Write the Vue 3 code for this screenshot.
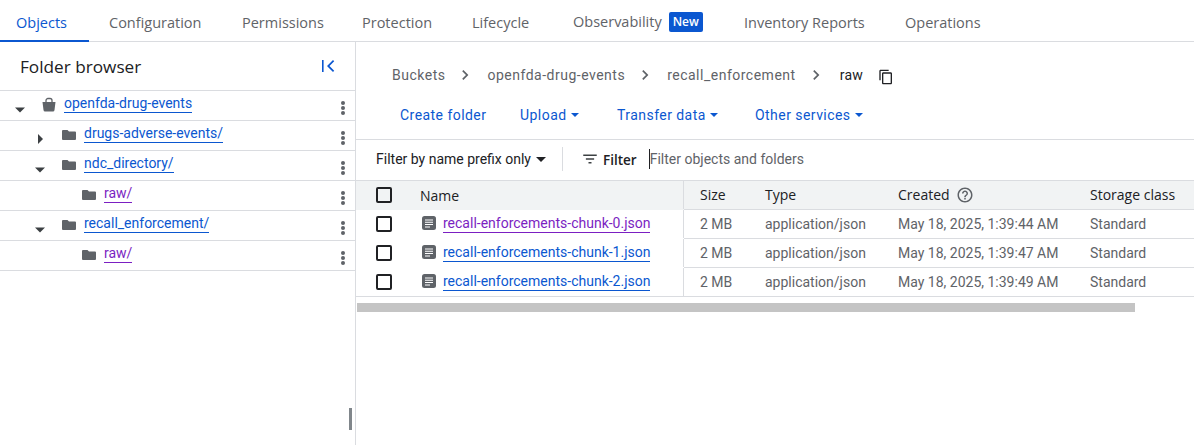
<template>
  <div class="pagina">
    <nav class="tabs">
      <a
        v-for="tab in tabs"
        :key="tab.label"
        class="tab"
        :class="{ activo: tab.active }"
        :style="{ width: tab.width + 'px' }"
      >
        <span :class="{ alto: tab.badge }">{{ tab.label }}</span>
        <span v-if="tab.badge" class="badge">New</span>
      </a>
    </nav>

    <div class="cuerpo">
      <aside class="lateral">
        <header class="lateral-cabecera">
          <h2>Folder browser</h2>
          <svg class="colapsar" width="24" height="24" viewBox="0 0 24 24">
            <path d="M5 6h1.600v12H5zM17.200 7.300 16 6l-6 6 6 6 1.200-1.300L12.500 12z" fill="#0b57d0" />
          </svg>
        </header>

        <div
          v-for="nodo in arbol"
          :key="nodo.id"
          class="nodo"
          :style="{ paddingLeft: nodo.nivel * 20 + 'px' }"
        >
          <span class="flecha">
            <svg v-if="nodo.flecha === 'abajo'" width="24" height="24" viewBox="0 0 24 24">
              <path d="M7 10.500h10l-5 5z" fill="#3c4043" />
            </svg>
            <svg v-else-if="nodo.flecha === 'derecha'" width="24" height="24" viewBox="0 0 24 24">
              <path d="M10 7l5 5-5 5z" fill="#3c4043" />
            </svg>
          </span>
          <svg v-if="nodo.cubo" class="icono-nodo" width="16" height="16" viewBox="0 0 16 16">
            <path d="M1.500 5h13l-1 8q-.2 1.500-1.500 1.500H4q-1.300 0-1.500-1.500z" fill="#5f6368" />
            <path d="M5 5.500V3.500a2 2 0 0 1 2-2h2a2 2 0 0 1 2 2v2" fill="none" stroke="#5f6368" stroke-width="1.300" />
          </svg>
          <svg v-else class="icono-nodo" width="16" height="16" viewBox="0 0 16 16">
            <path d="M2 3h4.500L8 4.500h6q1 0 1 1V12q0 1-1 1H2q-1 0-1-1V4q0-1 1-1z" fill="#5f6368" />
          </svg>
          <a class="enlace" :class="{ visitado: nodo.visitado }">{{ nodo.nombre }}</a>
          <svg class="puntos" width="24" height="24" viewBox="0 0 24 24">
            <circle cx="12" cy="7" r="2" fill="#5f6368" />
            <circle cx="12" cy="12" r="2" fill="#5f6368" />
            <circle cx="12" cy="17" r="2" fill="#5f6368" />
          </svg>
        </div>

        <span class="asa"></span>
      </aside>

      <main class="principal">
        <div class="migas">
          <template v-for="miga in migas" :key="miga">
            <span class="miga">{{ miga }}</span>
            <svg width="24" height="24" viewBox="0 0 24 24" class="separador">
              <path d="M9.400 7 8.200 8.200 12 12l-3.800 3.800L9.400 17l5-5z" fill="#5f6368" />
            </svg>
          </template>
          <span class="miga actual">raw</span>
          <svg class="copiar" width="16" height="16" viewBox="0 0 24 24">
            <path d="M16 1H4c-1.100 0-2 .9-2 2v14h2V3h12V1zm3 4H8c-1.100 0-2 .9-2 2v14c0 1.100.9 2 2 2h11c1.100 0 2-.9 2-2V7c0-1.100-.9-2-2-2zm0 16H8V7h11v14z" fill="#202124" />
          </svg>
        </div>

        <div class="acciones">
          <a class="accion crear">Create folder</a>
          <a v-for="a in acciones" :key="a.label" class="accion" :style="{ width: a.width + 'px' }">
            {{ a.label }}<i class="triangulo azul"></i>
          </a>
        </div>

        <div class="filtros">
          <span class="prefijo">Filter by name prefix only<i class="triangulo oscuro"></i></span>
          <span class="divisor"></span>
          <svg class="icono-filtro" width="18" height="18" viewBox="0 0 24 24">
            <path d="M3 6h18v2H3zM6.500 11h11v2h-11zM10 16h4v2h-4z" fill="#3c4043" />
          </svg>
          <span class="filtro">Filter</span>
          <span class="cursor"></span>
          <span class="placeholder">Filter objects and folders</span>
        </div>

        <div class="fila cabecera">
          <span class="col-check"><i class="check"></i></span>
          <span class="col-nombre">Name</span>
          <span class="derecha">
            <span class="col-tam">Size</span>
            <span class="col-tipo">Type</span>
            <span class="col-fecha">
              Created
              <svg width="18" height="18" viewBox="0 0 24 24">
                <path d="M11 18h2v-2h-2v2zm1-16C6.480 2 2 6.480 2 12s4.480 10 10 10 10-4.480 10-10S17.520 2 12 2zm0 18c-4.410 0-8-3.590-8-8s3.590-8 8-8 8 3.590 8 8-3.590 8-8 8zm0-14c-2.210 0-4 1.790-4 4h2c0-1.100.9-2 2-2s2 .9 2 2c0 2-3 1.750-3 5h2c0-2.250 3-2.500 3-5 0-2.210-1.790-4-4-4z" fill="#5f6368" />
              </svg>
            </span>
            <span class="col-clase">Storage class</span>
          </span>
        </div>

        <div v-for="f in archivos" :key="f.nombre" class="fila">
          <span class="col-check"><i class="check"></i></span>
          <span class="col-nombre archivo">
            <svg width="16" height="16" viewBox="0 0 16 16">
              <rect x="1" y="1" width="14" height="14" rx="2.500" fill="#5f6368" />
              <path d="M4 4.500h8v1H4zM4 6.800h8v1H4zM4 9.100h8v1H4zM4 11.400h5v1H4z" fill="#fff" />
            </svg>
            <a class="enlace" :class="{ visitado: f.visitado }">{{ f.nombre }}</a>
          </span>
          <span class="derecha">
            <span class="col-tam">2 MB</span>
            <span class="col-tipo">application/json</span>
            <span class="col-fecha">{{ f.fecha }}</span>
            <span class="col-clase">Standard</span>
          </span>
        </div>
        <div class="linea-final"></div>

        <div class="scroll"><div class="scroll-barra"></div></div>
      </main>
    </div>
  </div>
</template>

<script setup>
const tabs = [
  { label: "Objects", width: 89, active: true },
  { label: "Configuration", width: 133 },
  { label: "Permissions", width: 120 },
  { label: "Protection", width: 110 },
  { label: "Lifecycle", width: 101 },
  { label: "Observability", width: 171, badge: true },
  { label: "Inventory Reports", width: 161 },
  { label: "Operations", width: 120 },
];

const arbol = [
  { id: 1, nombre: "openfda-drug-events", nivel: 0, flecha: "abajo", cubo: true },
  { id: 2, nombre: "drugs-adverse-events/", nivel: 1, flecha: "derecha" },
  { id: 3, nombre: "ndc_directory/", nivel: 1, flecha: "abajo" },
  { id: 4, nombre: "raw/", nivel: 2, flecha: "", visitado: true },
  { id: 5, nombre: "recall_enforcement/", nivel: 1, flecha: "abajo" },
  { id: 6, nombre: "raw/", nivel: 2, flecha: "", visitado: true },
];

const migas = ["Buckets", "openfda-drug-events", "recall_enforcement"];

const acciones = [
  { label: "Upload", width: 97 },
  { label: "Transfer data", width: 138 },
  { label: "Other services", width: 130 },
];

const archivos = [
  { nombre: "recall-enforcements-chunk-0.json", fecha: "May 18, 2025, 1:39:44 AM", visitado: true },
  { nombre: "recall-enforcements-chunk-1.json", fecha: "May 18, 2025, 1:39:47 AM" },
  { nombre: "recall-enforcements-chunk-2.json", fecha: "May 18, 2025, 1:39:49 AM" },
];
</script>

<style>
html,
body {
  background: #fff;
  overflow: hidden;
}
</style>

<style scoped>
.pagina {
  width: 1194px;
  height: 445px;
  overflow: hidden;
  font-family: Roboto, "Liberation Sans", sans-serif;
  font-size: 14px;
  color: #5f6368;
}

.tabs {
  display: flex;
  height: 42px;
  box-sizing: border-box;
  border-bottom: 1px solid #dadce0;
}

.tab {
  display: flex;
  align-items: center;
  box-sizing: border-box;
  height: 41px;
  padding: 4px 0 0 16px;
  font-family: "Open Sans", sans-serif;
  font-size: 14.500px;
  color: #5f6368;
}

.tab.activo {
  color: #0b57d0;
  border-bottom: 2px solid #0b57d0;
  height: 42px;
  margin-right: 4px;
  padding-top: 5px;
}

.alto {
  margin-top: -2px;
}

.badge {
  margin-left: 7px;
  margin-top: -2px;
  width: 34px;
  height: 20px;
  line-height: 20px;
  text-align: center;
  background: #0b57d0;
  color: #fff;
  border-radius: 2px;
  font-size: 12px;
  font-weight: 600;
}

.cuerpo {
  display: flex;
  height: 403px;
}

.lateral {
  position: relative;
  width: 356px;
  box-sizing: border-box;
  border-right: 1px solid #dadce0;
}

.lateral-cabecera {
  display: flex;
  align-items: center;
  justify-content: space-between;
  height: 49px;
  box-sizing: border-box;
  padding: 0 14px 0 20px;
  border-bottom: 1px solid #dadce0;
}

h2 {
  margin: 0;
  font-family: "Open Sans", sans-serif;
  font-size: 17.200px;
  font-weight: 400;
  color: #202124;
}

.nodo {
  display: flex;
  align-items: center;
  height: 30px;
  box-sizing: border-box;
  border-bottom: 1px solid #dadce0;
}

.flecha {
  display: block;
  width: 24px;
  height: 24px;
  margin-left: 8px;
  margin-top: 6px;
  flex: none;
}

.icono-nodo {
  flex: none;
  margin-left: 9px;
  margin-right: 7px;
  margin-top: -2px;
}

.enlace {
  color: #0b57d0;
  border-bottom: 1px solid #0b57d0;
  line-height: 18px;
}

.enlace.visitado {
  color: #7b1fc2;
  border-bottom-color: #7b1fc2;
}

.nodo .enlace {
  margin-top: -4px;
}

.puntos {
  margin-left: auto;
  margin-right: 0;
  margin-top: 4px;
  flex: none;
}

.asa {
  position: absolute;
  left: 349px;
  top: 366px;
  width: 3px;
  height: 22px;
  background: #80868b;
}

.principal {
  width: 838px;
}

.migas {
  display: flex;
  align-items: center;
  height: 48px;
  padding-left: 36px;
  margin-top: 9px;
}

.miga {
  letter-spacing: 0.5px;
}

.miga.actual {
  color: #202124;
  margin-left: 2px;
  letter-spacing: 0.3px;
}

.separador {
  margin: 0 9px;
}

.copiar {
  margin-left: 15px;
  margin-top: 4px;
}

.acciones {
  display: flex;
  align-items: center;
  height: 31px;
  padding-left: 44px;
  padding-bottom: 9px;
  border-bottom: 1px solid #dadce0;
}

.accion {
  display: flex;
  align-items: center;
  color: #0b57d0;
  letter-spacing: 0.45px;
}

.crear {
  width: 120px;
  flex: none;
}

.triangulo {
  display: inline-block;
  width: 0;
  height: 0;
  margin-left: 4px;
  border-left: 5px solid transparent;
  border-right: 5px solid transparent;
  border-top: 5px solid #0b57d0;
}

.triangulo.azul {
  border-left-width: 4.500px;
  border-right-width: 4.500px;
  border-top-width: 4px;
}

.triangulo.oscuro {
  border-top-color: #202124;
  margin-left: 5px;
  vertical-align: 2px;
}

.filtros {
  display: flex;
  align-items: center;
  height: 41px;
  box-sizing: border-box;
  padding: 0 0 2px 20px;
  border-bottom: 1px solid #dadce0;
}

.prefijo {
  color: #202124;
  width: 186px;
  flex: none;
}

.divisor {
  width: 1px;
  height: 24px;
  background: #dadce0;
  margin-right: 18px;
}

.icono-filtro {
  margin-right: 4px;
}

.filtro {
  color: #202124;
  font-family: "Open Sans", sans-serif;
  font-size: 13.500px;
  font-weight: 600;
  margin-top: 1px;
}

.cursor {
  width: 1px;
  height: 20px;
  background: #202124;
  margin-left: 12px;
}

.fila {
  display: flex;
  align-items: center;
  height: 29px;
  box-sizing: border-box;
}

.fila.cabecera {
  background: #f1f3f4;
  color: #202124;
  font-family: "Open Sans", sans-serif;
  font-size: 14px;
}

.derecha {
  display: flex;
  align-items: center;
  flex: 1;
  height: 100%;
  box-sizing: border-box;
  padding-bottom: 1px;
  border-bottom: 1px solid #dadce0;
}

.fila:nth-last-child(3) .derecha {
  border-bottom: none;
}

.linea-final {
  height: 1px;
  margin-top: -1px;
  position: relative;
  background: #dadce0;
}

.col-check {
  width: 64px;
  flex: none;
  padding: 0 0 1px 20px;
  box-sizing: border-box;
  display: flex;
}

.check {
  display: block;
  width: 16px;
  height: 16px;
  box-sizing: border-box;
  border: 2px solid #202124;
  border-radius: 2px;
}

.col-nombre {
  width: 264px;
  flex: none;
  height: calc(100% - 1px);
  align-self: flex-start;
  display: flex;
  align-items: center;
  box-sizing: border-box;
  border-right: 1px solid #dadce0;
}

.archivo svg {
  margin-left: 1px;
  margin-right: 6px;
  margin-top: -2px;
  flex: none;
}

.archivo .enlace {
  margin-top: -2px;
}

.col-tam {
  width: 81px;
  flex: none;
  padding-left: 16px;
  box-sizing: border-box;
}

.col-tipo {
  width: 133px;
  flex: none;
}

.col-fecha {
  width: 192px;
  flex: none;
  display: flex;
  align-items: center;
  gap: 6px;
}

.col-clase {
  flex: none;
}

.scroll {
  height: 16px;
  padding: 6px 0 0 1px;
  box-sizing: border-box;
}

.scroll-barra {
  width: 778px;
  height: 9px;
  background: #c4c4c4;
}
</style>
